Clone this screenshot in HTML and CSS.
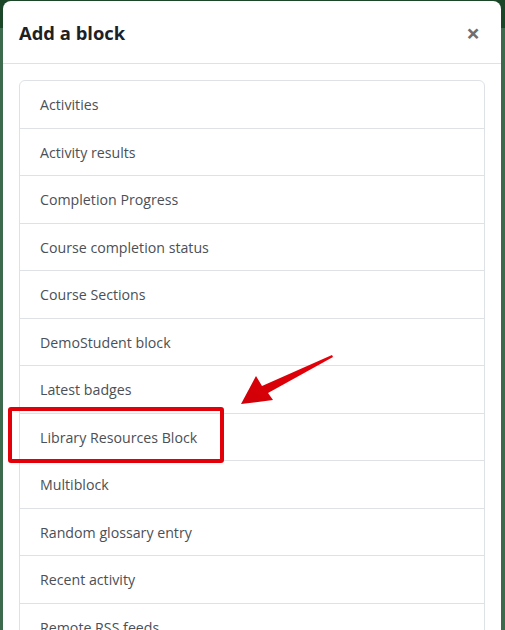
FILE: index.html
```html
<!DOCTYPE html>
<html>
<head>
<meta charset="utf-8">
<link rel="stylesheet" href="styles.css">
</head>
<body>
<div class="modal">
  <div class="modal-header">
    <h5 class="modal-title">Add a block</h5>
    <span class="close">&times;</span>
  </div>
  <div class="modal-body">
    <div class="list-group">
      <div class="item">Activities</div>
      <div class="item">Activity results</div>
      <div class="item">Completion Progress</div>
      <div class="item">Course completion status</div>
      <div class="item">Course Sections</div>
      <div class="item">DemoStudent block</div>
      <div class="item">Latest badges</div>
      <div class="item">Library Resources Block</div>
      <div class="item">Multiblock</div>
      <div class="item">Random glossary entry</div>
      <div class="item">Recent activity</div>
      <div class="item">Remote RSS feeds</div>
    </div>
  </div>
</div>
<div class="highlight"></div>
<svg class="arrow" width="100" height="60" viewBox="0 0 100 60">
  <defs>
    <linearGradient id="ag" x1="1" y1="0" x2="0" y2="1">
      <stop offset="0" stop-color="#e8000a"/>
      <stop offset="1" stop-color="#d00008"/>
    </linearGradient>
  </defs>
  <path d="M92 2 L93 4 L28 40 L33 47 L1 51 L16 23 L22 33 Z" fill="url(#ag)"/>
</svg>
</body>
</html>
```
FILE: styles.css
```css
html, body {
  margin: 0;
  padding: 0;
}
body {
  width: 505px;
  height: 630px;
  overflow: hidden;
  position: relative;
  background: linear-gradient(to bottom, #1b4627 0, #1b4627 28px, #3d6a4d 28px, #3d6a4d 100%);
  font-family: "Open Sans", "Noto Sans", sans-serif;
}
.modal {
  margin: 1px 4px 0 3px;
  background: #fff;
  border-radius: 8px 8px 0 0;
  height: 700px;
}
.modal-header {
  display: flex;
  align-items: center;
  justify-content: space-between;
  padding: 0 21px 0 16px;
  border-bottom: 1px solid #dee2e6;
  box-sizing: border-box;
  height: 63px;
}
.modal-title {
  margin: 0;
  font-size: 18.4px;
  font-weight: 700;
  color: #1d2125;
  padding-top: 1px;
}
.close {
  font-size: 24px;
  font-weight: 700;
  color: #6a7075;
  line-height: 1;
  margin-top: 1px;
}
.modal-body {
  padding: 16px;
}
.list-group {
  border: 1px solid #dee2e6;
  border-radius: 6px;
}
.item {
  padding: 13px 20px 11px;
  font-size: 14.2px;
  line-height: 22.5px;
  color: #4a5057;
  border-top: 1px solid #dee2e6;
}
.item:first-child {
  border-top: none;
  padding-top: 12px;
  padding-bottom: 11px;
  padding-top: 13px;
}
.highlight {
  position: absolute;
  left: 8px;
  top: 407px;
  width: 208px;
  height: 48px;
  border: 4.5px solid #e30008;
  border-radius: 3px;
}
.arrow {
  position: absolute;
  left: 240px;
  top: 353px;
}
```
